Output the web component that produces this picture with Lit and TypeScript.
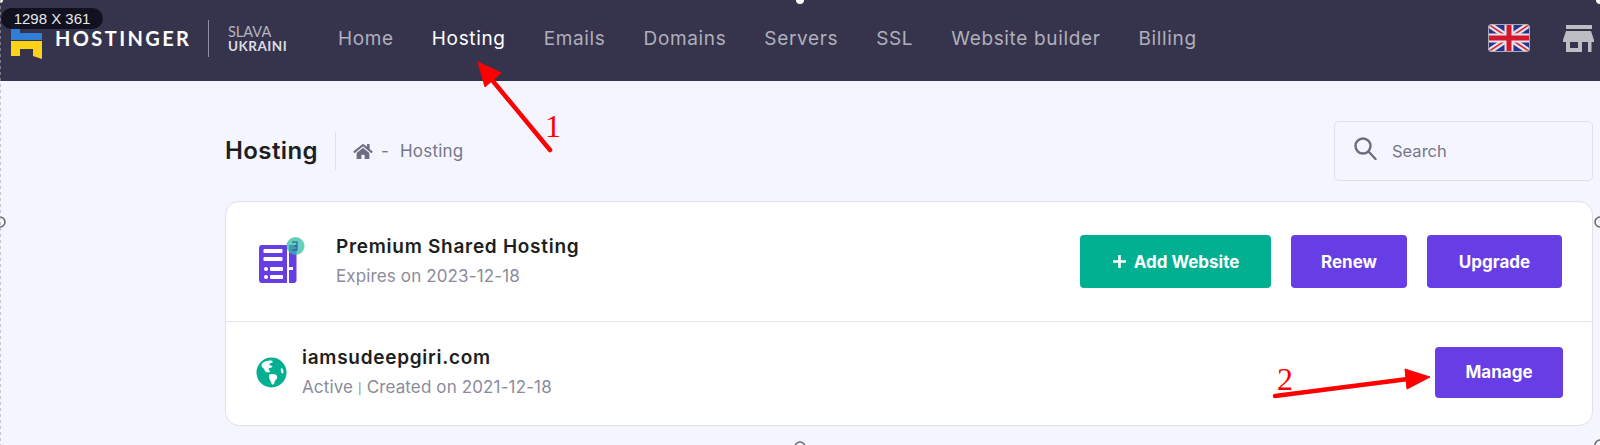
import { LitElement, html, css, svg } from "lit";
import { customElement } from "lit/decorators.js";

const NAV = ["Home", "Hosting", "Emails", "Domains", "Servers", "SSL", "Website builder", "Billing"];

@customElement("app-root")
export class AppRoot extends LitElement {
  static styles = css`
    :host { display: block; width: 1600px; height: 445px; position: relative; overflow: hidden; background: #f4f5ff; font-family: "Inter", "Noto Sans", sans-serif; color: #1d1e20; }
    * { box-sizing: border-box; }
    header { height: 81px; background: #36344d; display: flex; align-items: center; padding: 0 6px 5px 11px; }
    .logo { display: flex; align-items: center; width: 327px; flex: none; }
    .mark { width: 31px; height: 36px; flex: none; margin-top: 5px; }
    .word { margin-left: 13px; font: 700 20px "Lato", sans-serif; letter-spacing: 2.4px; color: #fff; width: 153px; }
    .sep { width: 1px; height: 37px; background: #8f8e9e; }
    .slava { margin-left: 19px; font: 400 14.5px/15.5px "Lato", sans-serif; color: #b5b4c0; margin-top: 2px; }
    .slava b { display: block; color: #dcdce2; font-weight: 700; font-size: 13.5px; letter-spacing: .5px; }
    nav { display: flex; gap: 38px; font-size: 19px; letter-spacing: .65px; color: #b0afbb; flex: 1; }
    nav a.on { color: #fff; }
    .flag { width: 42px; height: 28px; margin-right: 33px; flex: none; }
    .store { width: 31px; height: 27px; flex: none; }
    main { padding: 40px 7px 0 225px; }
    .top { display: flex; justify-content: space-between; align-items: center; height: 60px; }
    .crumbs { display: flex; align-items: center; }
    h1 { margin: 0; font-size: 24px; font-weight: 600; letter-spacing: .4px; padding-right: 17px; border-right: 1px solid #e0e1ea; height: 38px; line-height: 38px; }
    .home { width: 20px; height: 17px; margin-left: 17px; }
    .trail { color: #767688; font-size: 17px; letter-spacing: .2px; margin-left: 8px; display: flex; gap: 11px; }
    .search { width: 259px; height: 60px; border: 1px solid #dfe0ec; border-radius: 5px; display: flex; align-items: center; padding-left: 19px; gap: 15px; color: #767688; font-size: 16.5px; }
    .search svg { width: 23px; height: 23px; margin-top: -6px; }
    .card { margin-top: 20px; height: 225px; background: #fff; border: 1px solid #dfe0ea; border-radius: 14px; }
    .row { display: flex; align-items: center; }
    .r1 { height: 120px; border-bottom: 1px solid #e3e3e8; padding: 0 30px 0 33px; }
    .r2 { height: 103px; padding: 0 29px 0 30px; }
    .ico1 { width: 46px; height: 46px; flex: none; margin-right: 31px; margin-top: -4px; }
    .ico2 { width: 31px; height: 31px; flex: none; margin-right: 15px; margin-top: -2px; }
    .text { flex: 1; }
    .name { font-size: 19px; font-weight: 600; line-height: 26px; letter-spacing: .72px; }
    .sub { font-size: 17px; letter-spacing: .13px; color: #8b8b9b; line-height: 26px; margin-top: 3px; }
    .sub i { font-style: normal; color: #8a7a5c; font-size: 11px; }
    .btns { display: flex; gap: 20px; }
    button { all: unset; box-sizing: border-box; height: 53px; border-radius: 4px; color: #fff; font: 700 17px "Inter", sans-serif; display: flex; align-items: center; justify-content: center; background: #673de6; }
    .g { background: #00b090; width: 191px; gap: 7px; }
    .g svg { width: 15px; height: 15px; }
    .w1 { width: 116px; }
    .w2 { width: 135px; }
    .w3 { width: 128px; height: 51px; margin-top: -3px; }
    .chip { position: absolute; left: 1px; top: 8px; width: 102px; height: 21px; border-radius: 11px; background: rgba(15,15,28,.93); color: #e8e8e8; font: 400 15px/21px "Liberation Sans", sans-serif; text-align: center; }
    .over { position: absolute; left: 0; top: 0; width: 1600px; height: 445px; pointer-events: none; }
    .n { font-family: "Liberation Serif", serif; font-size: 32px; fill: #f00; }
  `;

  render() {
    return html`
      <header>
        <div class="logo">
          <svg class="mark" viewBox="0 0 31 36">
            <path d="M0 0h9v10L31 10v7H0z" fill="#2f7fd8"/>
            <path d="M0 18h31v18l-9-3V26H9v7l-9 0z" fill="#ffd21a"/>
          </svg>
          <span class="word">HOSTINGER</span>
          <span class="sep"></span>
          <span class="slava">SLAVA<b>UKRAINI</b></span>
        </div>
        <nav>${NAV.map((n) => html`<a class=${n === "Hosting" ? "on" : ""}>${n}</a>`)}</nav>
        <svg class="flag" viewBox="0 0 42 28">
          <defs><clipPath id="fc"><rect width="42" height="28" rx="4"/></clipPath></defs>
          <g clip-path="url(#fc)">
            <rect width="42" height="28" fill="#2a3190"/>
            <path d="M0 0L42 28M42 0L0 28" stroke="#e3e3e8" stroke-width="6"/>
            <path d="M0 0L42 28M42 0L0 28" stroke="#d8283c" stroke-width="1.600"/>
            <path d="M21 0V28M0 14H42" stroke="#e3e3e8" stroke-width="9"/>
            <path d="M21 0V28M0 14H42" stroke="#d4172e" stroke-width="5"/>
          </g>
          <rect x=".5" y=".5" width="41" height="27" rx="4" fill="none" stroke="#a9a9b3"/>
        </svg>
        <svg class="store" viewBox="0 0 31 27" fill="#bdbdc4">
          <rect x="3" y="0" width="26" height="4"/>
          <path d="M3 6h25l3 9v2H0v-2z"/>
          <path fill-rule="evenodd" d="M3 17h16v10H3zM7 17v6h8v-6z"/>
          <rect x="25" y="17" width="3.500" height="10"/>
        </svg>
      </header>
      <main>
        <div class="top">
          <div class="crumbs">
            <h1>Hosting</h1>
            <svg class="home" viewBox="0 0 576 512" fill="#6d6d80"><path d="M280 148L96 300v164a16 16 0 0 0 16 16l112-.3a16 16 0 0 0 16-16V368a16 16 0 0 1 16-16h64a16 16 0 0 1 16 16v95.600a16 16 0 0 0 16 16L464 480a16 16 0 0 0 16-16V300L296 148a12 12 0 0 0-16 0zM572 251l-84-69V44a12 12 0 0 0-12-12h-56a12 12 0 0 0-12 12v72l-89-74a48 48 0 0 0-61 0L4 251a12 12 0 0 0-2 17l26 31a12 12 0 0 0 17 2L280 107a12 12 0 0 1 16 0l235 194a12 12 0 0 0 17-2l26-31a12 12 0 0 0-2-17z"/></svg>
            <span class="trail"><span>-</span><span>Hosting</span></span>
          </div>
          <div class="search">
            <svg viewBox="0 0 23 23" fill="none" stroke="#6d6d80" stroke-width="2.400"><circle cx="9" cy="9" r="7.500"/><path d="M14.500 14.500l7 7.500" stroke-linecap="round"/></svg>
            <span>Search</span>
          </div>
        </div>
        <section class="card">
          <div class="row r1">
            <svg class="ico1" viewBox="0 0 46 46">
              <path d="M0 11a3 3 0 0 1 3-3h25v38H3a3 3 0 0 1-3-3z" fill="#673de6"/>
              <path d="M30 8h7.500v35a3 3 0 0 1-3 3H30z" fill="#673de6"/>
              <g fill="#fff">
                <rect x="4.500" y="12" width="19" height="4" rx="1"/><rect x="4.500" y="20" width="19" height="4" rx="1"/>
                <circle cx="7" cy="32" r="2"/><rect x="11" y="30" width="13" height="4" rx="1"/>
                <circle cx="7" cy="40" r="2"/><rect x="11" y="38" width="13" height="4" rx="1"/>
                <rect x="30" y="30" width="4" height="3"/>
              </g>
              <circle cx="36.500" cy="9" r="9" fill="#2fbfa7" opacity=".75"/>
              <path d="M33 5h5v8h-5M35 9h3" fill="none" stroke="#36509a" stroke-width="1.500" opacity=".75"/>
            </svg>
            <div class="text"><div class="name">Premium Shared Hosting</div><div class="sub">Expires on 2023-12-18</div></div>
            <div class="btns">
              <button class="g"><svg viewBox="0 0 15 15"><path d="M7.500 1v13M1 7.500h13" stroke="#fff" stroke-width="2.600"/></svg>Add Website</button>
              <button class="w1">Renew</button>
              <button class="w2">Upgrade</button>
            </div>
          </div>
          <div class="row r2">
            <svg class="ico2" viewBox="0 0 32 32">
              <circle cx="16" cy="16" r="15.500" fill="#00b090"/>
              <path d="M6 7c3-3 8-4 11-3 1 2-2 2-3 3-1 2 2 1 3 3-1 2-4 0-4 3 2 2 3 3-1 3-3-1-3-3-4-4-1-1-3-2-2-5zM14 18c4-1 8 0 8 3 0 2-3 3-3 6-1 2-3 2-3 0-1-3-4-6-2-9zM26 11c2 1 3 3 2 6-2 0-3-4-2-6z" fill="#fff"/>
            </svg>
            <div class="text"><div class="name">iamsudeepgiri.com</div><div class="sub">Active <i>|</i> Created on 2021-12-18</div></div>
            <button class="w3">Manage</button>
          </div>
        </section>
      </main>
      <div class="chip">1298 X 361</div>
      <svg class="over" viewBox="0 0 1600 445">
        ${svg`
          <path d="M550 150L492 80" stroke="#f00" stroke-width="4.500" stroke-linecap="round"/>
          <path d="M478 62L501 73L485 87z" fill="#f00" stroke="#f00"/>
          <path d="M1275 396L1408 379" stroke="#f00" stroke-width="4.500" stroke-linecap="round"/>
          <path d="M1405 369L1430 377L1407 389z" fill="#f00" stroke="#f00"/>
          <text class="n" x="545" y="137">1</text>
          <text class="n" x="1277" y="390">2</text>
          <circle cx="800" cy="0" r="4" fill="#fff"/>
          <circle cx="1600" cy="0" r="4" fill="#fff"/>
          <circle cx="0" cy="0" r="3" fill="#fff"/>
          <circle cx="800" cy="447" r="5" fill="#f4f5ff" stroke="#666" stroke-width="1.500"/>
          <circle cx="0" cy="222" r="5" fill="#f4f5ff" stroke="#666" stroke-width="1.500"/>
          <circle cx="1600" cy="222" r="5" fill="#f4f5ff" stroke="#666" stroke-width="1.500"/>
          <circle cx="1600" cy="445" r="5" fill="#f4f5ff" stroke="#666" stroke-width="1.500"/>
          <path d="M.5 0V445" stroke="#aaa" stroke-dasharray="3 3" opacity=".6"/>
        `}
      </svg>
    `;
  }
}
